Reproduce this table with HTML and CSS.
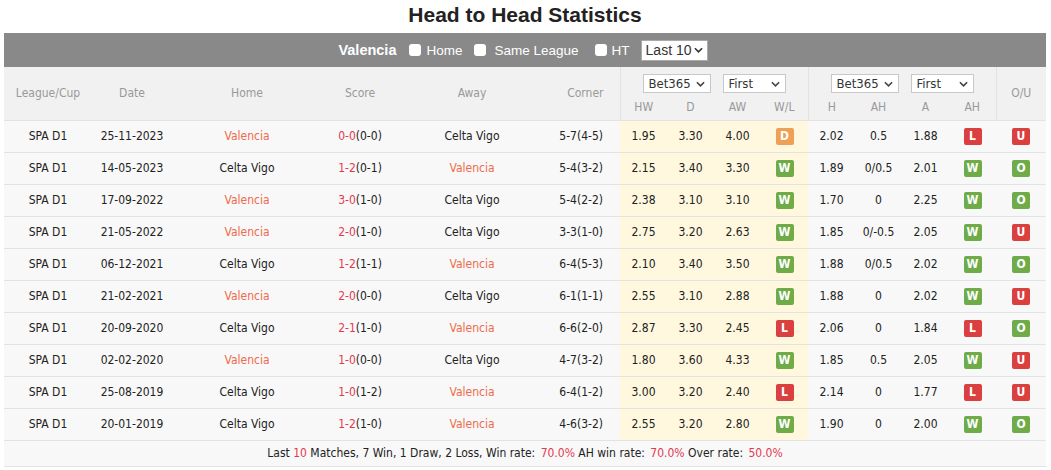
FILE: index.html
```html
<!DOCTYPE html>
<html>
<head>
<meta charset="utf-8">
<link rel="stylesheet" href="styles.css">
</head>
<body>
<div class="page">
  <h1 class="title">Head to Head Statistics</h1>
  <div class="filters">
    <span class="team">Valencia</span>
    <span class="chk chk-home"><i class="box"></i>Home</span>
    <span class="chk chk-league"><i class="box"></i>Same League</span>
    <span class="chk chk-ht"><i class="box"></i>HT</span>
    <span class="sel sel-last">Last 10<svg class="chev" viewBox="0 0 10 6" width="9" height="6"><path d="M1 1 L5 5 L9 1" fill="none" stroke="#333" stroke-width="1.8"/></svg></span>
  </div>
  <table class="h2h">
    <colgroup>
      <col style="width:88px"><col style="width:80px"><col style="width:150px"><col style="width:76px"><col style="width:148px"><col style="width:74px">
      <col style="width:47px"><col style="width:47px"><col style="width:47px"><col style="width:47px">
      <col style="width:47px"><col style="width:47px"><col style="width:47px"><col style="width:47px">
      <col style="width:50px">
    </colgroup>
    <thead>
      <tr class="hr1">
        <th rowspan="2">League/Cup</th>
        <th rowspan="2">Date</th>
        <th rowspan="2">Home</th>
        <th rowspan="2">Score</th>
        <th rowspan="2">Away</th>
        <th rowspan="2" class="corner">Corner</th>
        <th colspan="4" class="grp top">
          <div class="sels">
            <span class="sel sel-bet">Bet365<svg class="chev" viewBox="0 0 10 6" width="9" height="6"><path d="M1 1 L5 5 L9 1" fill="none" stroke="#444" stroke-width="1.8"/></svg></span>
            <span class="sel sel-first">First<svg class="chev" viewBox="0 0 10 6" width="9" height="6"><path d="M1 1 L5 5 L9 1" fill="none" stroke="#444" stroke-width="1.8"/></svg></span>
          </div>
        </th>
        <th colspan="4" class="grp top">
          <div class="sels">
            <span class="sel sel-bet">Bet365<svg class="chev" viewBox="0 0 10 6" width="9" height="6"><path d="M1 1 L5 5 L9 1" fill="none" stroke="#444" stroke-width="1.8"/></svg></span>
            <span class="sel sel-first">First<svg class="chev" viewBox="0 0 10 6" width="9" height="6"><path d="M1 1 L5 5 L9 1" fill="none" stroke="#444" stroke-width="1.8"/></svg></span>
          </div>
        </th>
        <th rowspan="2" class="grp">O/U</th>
      </tr>
      <tr class="hr2">
        <th class="grp">HW</th><th>D</th><th>AW</th><th>W/L</th>
        <th class="grp">H</th><th>AH</th><th>A</th><th>AH</th>
      </tr>
    </thead>
    <tbody>
      <tr><td>SPA D1</td><td>25-11-2023</td><td class="fav">Valencia</td><td><span class="ft">0-0</span>(0-0)</td><td>Celta Vigo</td><td class="cor">5-7(4-5)</td><td class="y">1.95</td><td class="y">3.30</td><td class="y">4.00</td><td class="y"><b class="bd d">D</b></td><td>2.02</td><td>0.5</td><td>1.88</td><td><b class="bd l">L</b></td><td><b class="bd l">U</b></td></tr>
      <tr><td>SPA D1</td><td>14-05-2023</td><td>Celta Vigo</td><td><span class="ft">1-2</span>(0-1)</td><td class="fav">Valencia</td><td class="cor">5-4(3-2)</td><td class="y">2.15</td><td class="y">3.40</td><td class="y">3.30</td><td class="y"><b class="bd w">W</b></td><td>1.89</td><td>0/0.5</td><td>2.01</td><td><b class="bd w">W</b></td><td><b class="bd w">O</b></td></tr>
      <tr><td>SPA D1</td><td>17-09-2022</td><td class="fav">Valencia</td><td><span class="ft">3-0</span>(1-0)</td><td>Celta Vigo</td><td class="cor">5-4(2-2)</td><td class="y">2.38</td><td class="y">3.10</td><td class="y">3.10</td><td class="y"><b class="bd w">W</b></td><td>1.70</td><td>0</td><td>2.25</td><td><b class="bd w">W</b></td><td><b class="bd w">O</b></td></tr>
      <tr><td>SPA D1</td><td>21-05-2022</td><td class="fav">Valencia</td><td><span class="ft">2-0</span>(1-0)</td><td>Celta Vigo</td><td class="cor">3-3(1-0)</td><td class="y">2.75</td><td class="y">3.20</td><td class="y">2.63</td><td class="y"><b class="bd w">W</b></td><td>1.85</td><td>0/-0.5</td><td>2.05</td><td><b class="bd w">W</b></td><td><b class="bd l">U</b></td></tr>
      <tr><td>SPA D1</td><td>06-12-2021</td><td>Celta Vigo</td><td><span class="ft">1-2</span>(1-1)</td><td class="fav">Valencia</td><td class="cor">6-4(5-3)</td><td class="y">2.10</td><td class="y">3.40</td><td class="y">3.50</td><td class="y"><b class="bd w">W</b></td><td>1.88</td><td>0/0.5</td><td>2.02</td><td><b class="bd w">W</b></td><td><b class="bd w">O</b></td></tr>
      <tr><td>SPA D1</td><td>21-02-2021</td><td class="fav">Valencia</td><td><span class="ft">2-0</span>(0-0)</td><td>Celta Vigo</td><td class="cor">6-1(1-1)</td><td class="y">2.55</td><td class="y">3.10</td><td class="y">2.88</td><td class="y"><b class="bd w">W</b></td><td>1.88</td><td>0</td><td>2.02</td><td><b class="bd w">W</b></td><td><b class="bd l">U</b></td></tr>
      <tr><td>SPA D1</td><td>20-09-2020</td><td>Celta Vigo</td><td><span class="ft">2-1</span>(1-0)</td><td class="fav">Valencia</td><td class="cor">6-6(2-0)</td><td class="y">2.87</td><td class="y">3.30</td><td class="y">2.45</td><td class="y"><b class="bd l">L</b></td><td>2.06</td><td>0</td><td>1.84</td><td><b class="bd l">L</b></td><td><b class="bd w">O</b></td></tr>
      <tr><td>SPA D1</td><td>02-02-2020</td><td class="fav">Valencia</td><td><span class="ft">1-0</span>(0-0)</td><td>Celta Vigo</td><td class="cor">4-7(3-2)</td><td class="y">1.80</td><td class="y">3.60</td><td class="y">4.33</td><td class="y"><b class="bd w">W</b></td><td>1.85</td><td>0.5</td><td>2.05</td><td><b class="bd w">W</b></td><td><b class="bd l">U</b></td></tr>
      <tr><td>SPA D1</td><td>25-08-2019</td><td>Celta Vigo</td><td><span class="ft">1-0</span>(1-2)</td><td class="fav">Valencia</td><td class="cor">6-4(1-2)</td><td class="y">3.00</td><td class="y">3.20</td><td class="y">2.40</td><td class="y"><b class="bd l">L</b></td><td>2.14</td><td>0</td><td>1.77</td><td><b class="bd l">L</b></td><td><b class="bd l">U</b></td></tr>
      <tr><td>SPA D1</td><td>20-01-2019</td><td>Celta Vigo</td><td><span class="ft">1-2</span>(1-0)</td><td class="fav">Valencia</td><td class="cor">4-6(3-2)</td><td class="y">2.55</td><td class="y">3.20</td><td class="y">2.80</td><td class="y"><b class="bd w">W</b></td><td>1.90</td><td>0</td><td>2.00</td><td><b class="bd w">W</b></td><td><b class="bd w">O</b></td></tr>
      <tr class="sum"><td colspan="15">Last <span class="rd">10</span> Matches, 7 Win, 1 Draw, 2 Loss, Win rate:&ensp;<span class="rd">70.0%</span> AH win rate:&ensp;<span class="rd">70.0%</span> Over rate:&ensp;<span class="rd">50.0%</span></td></tr>
    </tbody>
  </table>
</div>
</body>
</html>
```

FILE: styles.css
```css
html, body {
  margin: 0;
  padding: 0;
  background: #fff;
}
body {
  font-family: "DejaVu Sans Condensed", "DejaVu Sans", sans-serif;
  font-size: 12px;
  color: #222;
}
.page {
  margin: 0 5px 0 4px;
}
.title {
  margin: 0;
  height: 33px;
  line-height: 29px;
  text-align: center;
  font-family: "Liberation Sans", Arial, sans-serif;
  font-size: 21px;
  font-weight: bold;
  color: #222;
}
.filters {
  height: 34px;
  background: #898989;
  display: flex;
  align-items: center;
  justify-content: center;
  font-family: "Liberation Sans", Arial, sans-serif;
  font-size: 13.5px;
  color: #fff;
  padding-right: 4px;
}
.team {
  font-weight: bold;
  font-size: 14.5px;
  margin-right: 13px;
}
.chk {
  display: inline-flex;
  align-items: center;
}
.chk .box {
  width: 12px;
  height: 12px;
  background: #fff;
  border-radius: 3px;
  margin-right: 5px;
}
.chk-home { margin-right: 12px; }
.chk-league { margin-right: 16px; }
.chk-league .box { margin-right: 8px; }
.chk-ht { margin-right: 11px; }
.sel {
  display: inline-flex;
  align-items: center;
  justify-content: space-between;
  background: #fff;
  border: 1px solid #c8c8c8;
  box-sizing: border-box;
  color: #333;
}
.sel-last {
  height: 21px;
  width: 67px;
  padding: 0 4px 0 4px;
  font-size: 14px;
  border-color: #aaa;
}
.h2h {
  width: 1042px;
  border-collapse: collapse;
  table-layout: fixed;
}
.h2h th {
  background: #f1f1f1;
  color: #999;
  font-weight: normal;
  text-align: center;
  padding: 0;
  font-size: 12px;
}
.hr1 th { height: 28px; }
.hr1 th.top { vertical-align: top; }
.hr2 th { height: 25px; vertical-align: top; padding-top: 5px; box-sizing: border-box; }
.h2h thead tr.hr2 th { border-bottom: 1px solid #e3e3e3; }
.h2h thead tr.hr1 th[rowspan] { border-bottom: 1px solid #e3e3e3; }
.h2h th.grp { border-left: 1px solid #e3e3e3; }
.h2h th.corner { text-align: right; padding-right: 16px; }
.sels {
  display: flex;
  justify-content: center;
  gap: 12px;
  padding-top: 7px;
}
.sel-bet {
  width: 68px;
  height: 19px;
  padding: 0 5px 0 5px;
  font-size: 13px;
}
.sel-first {
  width: 63px;
  height: 19px;
  padding: 0 5px 0 5px;
  font-size: 13px;
}
.h2h td {
  height: 31px;
  padding: 0;
  text-align: center;
  background: #f8f8f8;
  border-bottom: 1px solid #e3e3e3;
  color: #222;
  white-space: nowrap;
}
.h2h td.y { background: #fff8df; }
.h2h td.cor { text-align: right; padding-right: 17px; }
.fav { color: #ee6a4a !important; }
.ft { color: #e3394f; }
.bd {
  display: inline-block;
  width: 18px;
  height: 17px;
  line-height: 17px;
  border-radius: 2px;
  color: #fff;
  font-weight: bold;
  font-size: 12px;
  vertical-align: middle;
}
.bd.w { background: #6fab48; }
.bd.l { background: #d9403f; }
.bd.d { background: #f0a054; }
.h2h tr.sum td {
  height: 25px;
  background: #f8f8f8;
  border-bottom: 1px solid #e3e3e3;
}
.rd { color: #e3394f; }
```
